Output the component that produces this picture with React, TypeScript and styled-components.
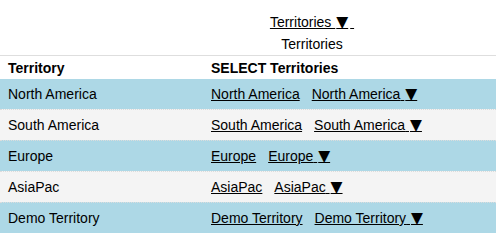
import styled, { createGlobalStyle } from 'styled-components';

const GlobalStyle = createGlobalStyle`
  body {
    margin: 0;
    background: #fff;
    font-family: "Liberation Sans", Arial, sans-serif;
    font-size: 14px;
    color: #000;
  }
`;

const territories = ['North America', 'South America', 'Europe', 'AsiaPac', 'Demo Territory'];

const App = () => {
  return (
    <>
      <GlobalStyle />
      <Wrapper>
        <TopBlock>
          <Link href="#">Territories <Arrow>▼</Arrow>&nbsp;</Link>
          <Caption>Territories</Caption>
        </TopBlock>
        <Table>
          <HeadRow>
            <Cell>Territory</Cell>
            <Cell>SELECT Territories</Cell>
          </HeadRow>
          {territories.map((name, i) => (
            <Row key={name} $alt={i % 2 === 1}>
              <Cell>{name}</Cell>
              <Cell>
                <Link href="#">{name}</Link>
                <Link href="#">{name} <Arrow>▼</Arrow></Link>
              </Cell>
            </Row>
          ))}
        </Table>
      </Wrapper>
    </>
  );
};
export default App;

const Wrapper = styled.div`
  width: 496px;
`;

const TopBlock = styled.div`
  display: flex;
  flex-direction: column;
  align-items: center;
  padding: 12px 0 1px 128px;
  line-height: 20px;
  border-bottom: 1px solid #dedede;
`;

const Caption = styled.div`
  margin-top: 2px;
`;

const Arrow = styled.span`
  font-family: "DejaVu Sans", sans-serif;
  font-size: 15.5px;
  line-height: 14px;
  padding: 0 2px 0 1px;
`;

const Link = styled.a`
  color: #000;
  text-decoration: underline;
  & + & {
    margin-left: 12px;
  }
`;

const Table = styled.div`
  display: flex;
  flex-direction: column;
`;

const Row = styled.div<{ $alt?: boolean }>`
  display: grid;
  grid-template-columns: 203px 1fr;
  height: 30px;
  align-items: center;
  background: ${p => (p.$alt ? '#f4f4f4' : '#add8e6')};
  & + & {
    border-top: 1px dotted #dcdcdc;
  }
`;

const HeadRow = styled.div`
  display: grid;
  grid-template-columns: 203px 1fr;
  height: 23px;
  align-items: center;
  font-weight: bold;
`;

const Cell = styled.div`
  padding-left: 8px;
  white-space: nowrap;
`;
